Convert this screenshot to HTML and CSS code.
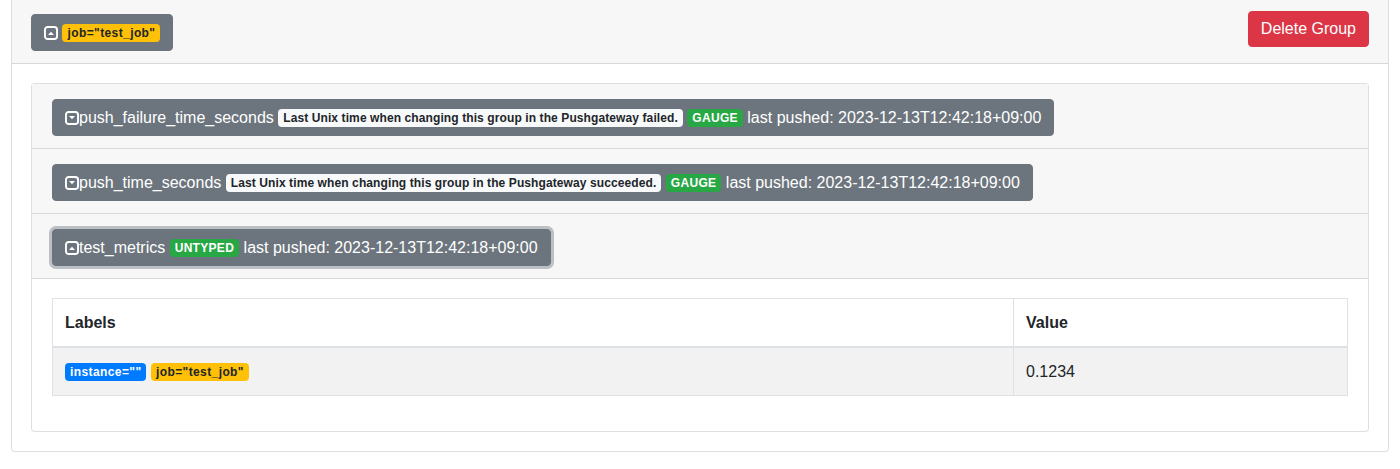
FILE: index.html
```html
<!DOCTYPE html>
<html>
<head>
<meta charset="utf-8">
<link rel="stylesheet" href="styles.css">
</head>
<body>
<div class="page">
  <div class="card outer">
    <div class="group-header">
      <button class="btn btn-secondary group-btn"><svg class="caret" viewBox="0 0 16 16"><rect x="1.1" y="1.1" width="13.8" height="13.8" rx="3.2" fill="none" stroke="#fff" stroke-width="2.2"/><polygon points="4.6,10.4 11.4,10.4 8,6.6" fill="#fff"/></svg> <span class="badge badge-warning">job="test_job"</span></button>
      <button class="btn btn-danger">Delete Group</button>
    </div>
    <div class="outer-body">
      <div class="card inner">
        <div class="metric-header">
          <button class="btn btn-secondary"><svg class="caret" viewBox="0 0 16 16"><rect x="1.1" y="1.1" width="13.8" height="13.8" rx="3.2" fill="none" stroke="#fff" stroke-width="2.2"/><polygon points="4.6,5.6 11.4,5.6 8,9.4" fill="#fff"/></svg>push_failure_time_seconds <span class="badge badge-light">Last Unix time when changing this group in the Pushgateway failed.</span> <span class="badge badge-success">GAUGE</span> last pushed: 2023-12-13T12:42:18+09:00</button>
        </div>
        <div class="metric-header">
          <button class="btn btn-secondary"><svg class="caret" viewBox="0 0 16 16"><rect x="1.1" y="1.1" width="13.8" height="13.8" rx="3.2" fill="none" stroke="#fff" stroke-width="2.2"/><polygon points="4.6,5.6 11.4,5.6 8,9.4" fill="#fff"/></svg>push_time_seconds <span class="badge badge-light">Last Unix time when changing this group in the Pushgateway succeeded.</span> <span class="badge badge-success">GAUGE</span> last pushed: 2023-12-13T12:42:18+09:00</button>
        </div>
        <div class="metric-header">
          <button class="btn btn-secondary focused"><svg class="caret" viewBox="0 0 16 16"><rect x="1.1" y="1.1" width="13.8" height="13.8" rx="3.2" fill="none" stroke="#fff" stroke-width="2.2"/><polygon points="4.6,10.4 11.4,10.4 8,6.6" fill="#fff"/></svg>test_metrics <span class="badge badge-success">UNTYPED</span> last pushed: 2023-12-13T12:42:18+09:00</button>
        </div>
        <div class="inner-body">
          <table class="metrics-table">
            <thead>
              <tr><th>Labels</th><th class="col-value">Value</th></tr>
            </thead>
            <tbody>
              <tr><td><span class="badge badge-primary">instance=""</span> <span class="badge badge-warning">job="test_job"</span></td><td>0.1234</td></tr>
            </tbody>
          </table>
        </div>
      </div>
    </div>
  </div>
</div>
</body>
</html>
```

FILE: styles.css
```css
* { box-sizing: border-box; }
html, body { margin: 0; padding: 0; background: #fff; }
body {
  font-family: "Liberation Sans", Arial, sans-serif;
  font-size: 16px;
  line-height: 1.5;
  color: #212529;
}
.page { padding: 0 11px; }

.card {
  background: #fff;
  border: 1px solid rgba(0,0,0,.125);
  border-radius: 4px;
}
.outer {
  border-top: none;
  border-radius: 0 0 4px 4px;
}

.group-header {
  display: flex;
  justify-content: space-between;
  align-items: flex-start;
  padding: 11px 19px 12px;
  background: #f7f7f7;
  border-bottom: 1px solid rgba(0,0,0,.125);
}
.outer-body { padding: 19px; }

.btn {
  font-family: inherit;
  font-size: 16px;
  line-height: 24px;
  border: 1px solid transparent;
  border-radius: 4px;
  padding: 5px 12px;
  color: #fff;
  cursor: pointer;
  white-space: nowrap;
  text-align: left;
}
.btn-secondary { background: #6c757d; border-color: #6c757d; }
.btn-danger { background: #dc3545; border-color: #dc3545; padding: 5px 12px; }
.group-btn { margin-top: 3px; padding: 6px 12px 5px; }
.focused { box-shadow: 0 0 0 3px rgba(130,138,145,.5); }

.caret {
  width: 14px;
  height: 14px;
  vertical-align: -2px;
}

.badge {
  display: inline-block;
  font-size: 12px;
  font-weight: 700;
  line-height: 1;
  padding: 3px 5px;
  border-radius: 4px;
  vertical-align: 1px;
  white-space: nowrap;
  letter-spacing: 0.1px;
}
.badge-warning { background: #ffc107; color: #212529; letter-spacing: 0.4px; }
.badge-light { background: #f8f9fa; color: #212529; }
.badge-success { background: #28a745; color: #fff; letter-spacing: 0.3px; }
.badge-primary { background: #007bff; color: #fff; letter-spacing: 0.4px; }

.metric-header {
  padding: 15px 20px 12px;
  background: #f7f7f7;
  border-bottom: 1px solid rgba(0,0,0,.125);
}
.metric-header .btn { padding: 6px 12px 5px; }

.inner-body { padding: 19px 20px; }

.metrics-table {
  width: 100%;
  border-collapse: collapse;
  margin-bottom: 16px;
}
.metrics-table th,
.metrics-table td {
  border: 1px solid #dee2e6;
  padding: 12px 12px 11px;
  text-align: left;
  vertical-align: top;
  line-height: 24px;
}
.metrics-table th { font-weight: 700; }
.metrics-table thead th { border-bottom: 2px solid #dee2e6; }
.metrics-table tbody tr { background: #f2f2f2; }
.col-value { width: 334px; }
```
